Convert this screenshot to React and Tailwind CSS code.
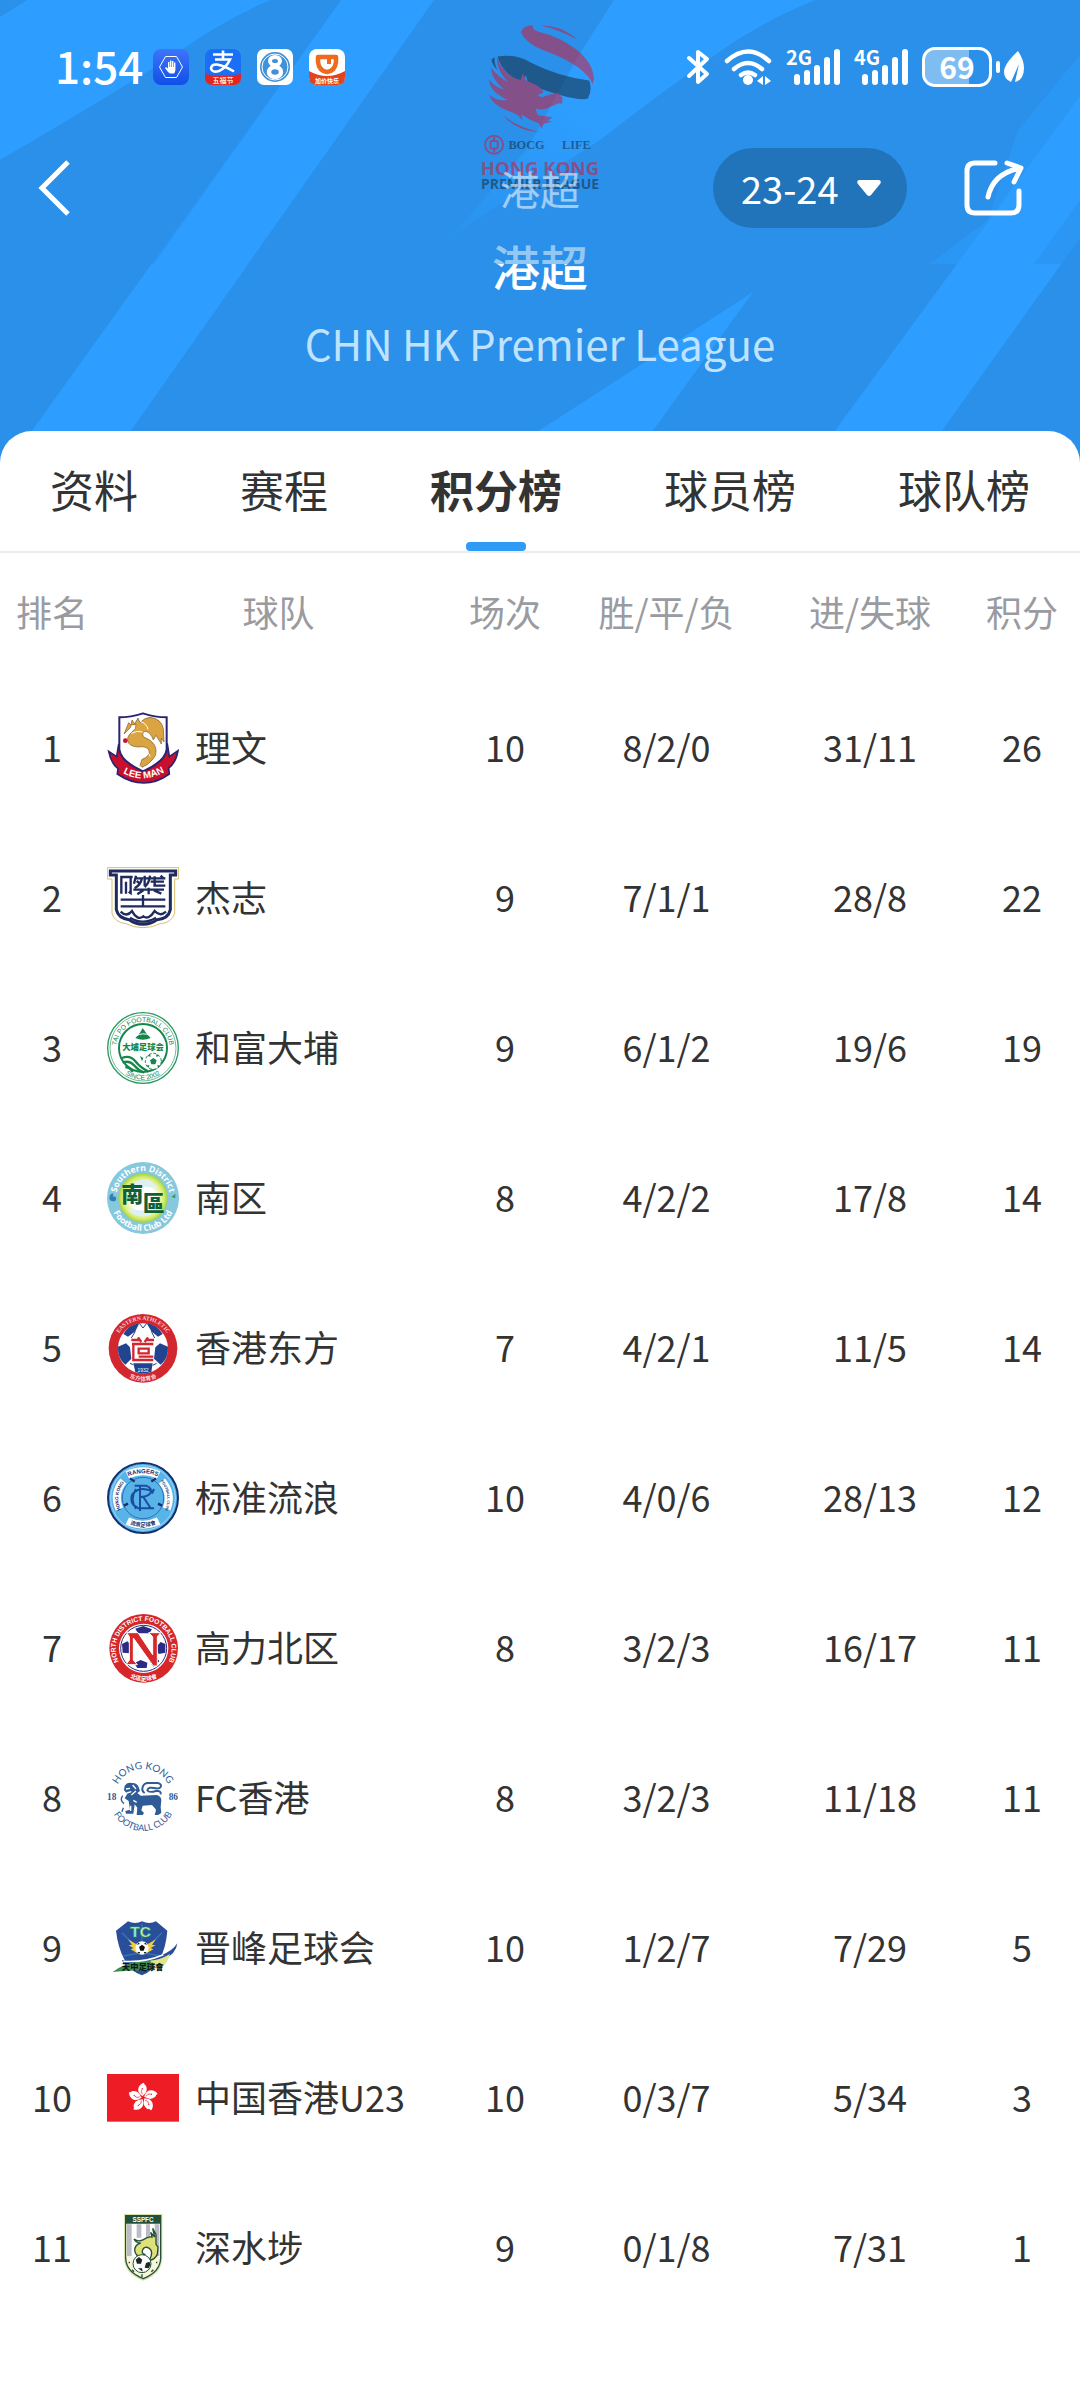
import React, { useState } from "react";

const tabs = ["资料", "赛程", "积分榜", "球员榜", "球队榜"];

/* ---------- Status bar ---------- */

const HandApp = () => (
    <svg className="w-9 h-9" viewBox="0 0 36 36">
        <defs>
            <linearGradient id="handBg" x1="0" y1="0" x2="0" y2="1">
                <stop offset="0" stopColor="#3f74fb" />
                <stop offset="1" stopColor="#0f50e8" />
            </linearGradient>
        </defs>
        <rect width="36" height="36" rx="8" fill="url(#handBg)" />
        <path d="M12.500 7.500h11l6 10.500-6 10.500h-11l-6-10.500z" fill="none" stroke="#fff" strokeWidth="1" strokeLinejoin="round" />
        <path d="M15 23l-3-4 1-1 2 1.500v-6.500h1.400v5h.6v-6.500h1.400v6.500h.6v-6h1.400v6h.6v-4.500h1.400v8q-.4 2.500-2 3h-3.400z" fill="#fff" />
    </svg>
);

const PayApp = () => (
    <svg className="w-9 h-9" viewBox="0 0 36 36">
        <rect width="36" height="33" rx="8" fill="#1a6ff5" />
        <path d="M8 5.500h20M18 1.500v9M10 10.500h15Q21 19 14 22Q7 24 6 19.500Q6.500 15 12 15.500Q20 17 29 22.500" fill="none" stroke="#fff" strokeWidth="2.600" />
        <path d="M0 25q18 4 36 0v3q0 8-8 8h-20q-8 0-8-8z" fill="#e5231f" />
        <text x="18" y="34" textAnchor="middle" fontSize="7" fontWeight="700" fill="#ffe6c0">五福节</text>
    </svg>
);

const EightApp = () => (
    <svg className="w-9 h-9" viewBox="0 0 36 36">
        <rect width="36" height="36" rx="7" fill="#fff" />
        <circle cx="18" cy="18" r="15" fill="#3f91d8" />
        <circle cx="18" cy="18" r="13" fill="#3f91d8" stroke="#fff" strokeWidth="1" />
        <ellipse cx="18" cy="12" rx="5" ry="4" fill="none" stroke="#fff" strokeWidth="4" />
        <ellipse cx="18" cy="23" rx="6" ry="5" fill="none" stroke="#fff" strokeWidth="4.500" />
    </svg>
);

const RideApp = () => (
    <svg className="w-9 h-9" viewBox="0 0 36 36">
        <rect width="36" height="36" rx="8" fill="#fff" />
        <path d="M9 8h18v5q-1 9-9 10-8-1-9-10z" fill="none" stroke="#ee6a1f" strokeWidth="4.500" strokeLinejoin="round" />
        <path d="M18 9h4v6h-4z" fill="#ee6a1f" />
        <path d="M0 22q18 10 36 0v6q0 8-8 8h-20q-8 0-8-8z" fill="#e2431e" />
        <text x="18" y="34" textAnchor="middle" fontSize="6" fontWeight="700" fill="#fff">加价快乐</text>
    </svg>
);

const Signal = ({ label }) => (
    <svg className="w-[54px] h-9 overflow-visible" viewBox="0 0 54 36" fill="#fff">
        <text x="0" y="16" fontSize="20" fontWeight="700">{label}</text>
        <rect x="8" y="25" width="6" height="11" rx="3" />
        <rect x="18" y="21" width="6" height="15" rx="3" />
        <rect x="28" y="16" width="6" height="20" rx="3" />
        <rect x="38" y="8" width="6" height="28" rx="3" />
        <rect x="48" y="0" width="6" height="36" rx="3" />
    </svg>
);

const StatusBar = () => (
    <div className="flex h-10 items-center justify-between pl-[55px] pr-14 text-white">
        <div className="flex items-center">
            <span className="w-[98px] pb-1 text-[44px] leading-10 font-medium">1:54</span>
            <div className="flex gap-4">
                <HandApp />
                <PayApp />
                <EightApp />
                <RideApp />
            </div>
        </div>
        <div className="flex items-center gap-[14px]">
            <svg className="w-6 h-9" viewBox="0 0 24 36" fill="none" stroke="#fff" strokeWidth="4" strokeLinecap="round" strokeLinejoin="round">
                <path d="M3 9l18 16-9 8v-30l9 7-18 17" />
            </svg>
            <svg className="w-12 h-9" viewBox="0 0 48 36" fill="none" stroke="#fff" strokeWidth="4.500" strokeLinecap="round">
                <path d="M3 12q21-19 42 0M10 20q14-12 28 0M17 26q7-5 14 0" />
                <circle cx="24" cy="31" r="5" fill="#fff" stroke="none" />
                <path d="M33 32l6-5v9zM47 32l-6-5v9z" fill="#fff" stroke="none" />
            </svg>
            <Signal label="2G" />
            <Signal label="4G" />
            <div className="flex items-center gap-1">
                <div className="relative h-10 w-[70px] rounded-[13px] border-3 border-white">
                    <div className="absolute inset-y-0 left-0 w-[69%] rounded-l-[10px] bg-white/40" />
                    <span className="relative block text-center text-[30px] leading-[32px] font-bold">69</span>
                </div>
                <div className="h-3 w-1 rounded-full bg-white" />
                <svg className="w-5 h-8" viewBox="0 0 20 32" fill="#fff">
                    <path d="M14 0q6 9 6 17 0 12-9 14l4-18-8 18q-7-3-7-10 0-8 14-21z" />
                </svg>
            </div>
        </div>
    </div>
);

/* ---------- Header ---------- */

const HeroPattern = () => (
    <svg className="absolute inset-0 h-full w-full" viewBox="0 0 1080 464" preserveAspectRatio="xMidYMin slice" fill="#2d9eff">
        <defs>
            <linearGradient id="bolt" x1="1" y1="0" x2="0" y2="1">
                <stop offset="0" stopColor="#2d9eff" />
                <stop offset="0.550" stopColor="#2d9eff" />
                <stop offset="1" stopColor="#2a92ee" />
            </linearGradient>
        </defs>
        <path d="M27 0h243q-50 22-90 51-70 45-180 109v-143z" />
        <path d="M341 0h93l-304 432-22 32h-100l23-32z" />
        <path d="M614 0h201q-50 20-96 52-60 42-119 88-70 44-149 97l76-88 52-94z" fill="url(#bolt)" />
        <path d="M753 292l-101 140-20 32h-140l48-34z" />
        <path d="M1080 96v142l-139 194-22 32h-108l23-32z" />
    </svg>
);

const ToolbarPattern = () => (
    <svg className="absolute inset-0 h-full w-full" viewBox="0 0 1080 264" preserveAspectRatio="xMidYMin slice">
        <rect width="1080" height="264" fill="#2a90ea" />
        <path d="M614 0h201q-50 20-96 52-60 42-119 88-70 44-149 97l76-88 52-94z" fill="url(#bolt)" />
        <g fill="#2d9eff">
            <path d="M27 0h243q-50 22-90 51-70 45-180 109v-143z" />
            <path d="M341 0h93l-186 264h-94z" />
            <path d="M1080 55v145l-46 64h-104l58-44 30-90z" />
        </g>
    </svg>
);

const LeagueEmblem = () => (
    <svg className="w-[120px] h-[173px]" viewBox="120 60 360 520">
        <g fill="#e0102a">
            <path d="M243 95q6-18 35-19-4 14 20 20 60 14 110 52 52 40 54 90l-4 16q-10-28-44-52-40-28-90-46-70-26-81-61z" />
            <path d="M305 77q60-2 108 43-50-30-108-43z" />
            <path d="M188 345q40 36 112 52-70-2-112-52z" />
        </g>
        <path d="M172 170q56-10 104 20 80 40 172 52 10 28-4 54-20 8-90-12-60-20-90-32l-6-26-14 20q-54-20-72-76z" fill="#14202c" />
        <path d="M154 178l10-6q-2 20 8 38-16-14-18-32z" fill="#14202c" />
        <path d="M170 176q2 40 34 70-30-14-52-44 4 40 40 66-24-2-46-30 4 34 38 52 10 8 20 10-28 8-58-16 14 34 56 48l-10-2q40 8 56 32l-4-18q26 18 52 26l8 16 8-14 24-6-12-4 14-10-44-6-8-20q18 6 34 0l36-16 10 2 2-18-14-14-24 4-24 8-14-6 18-8-6-12-18-12-28-12-10-22-6 20q-50-10-70-66z" fill="#e0102a" />
        <g fill="none" stroke="#e0102a" strokeWidth="6">
            <circle cx="162" cy="435" r="27" />
            <rect x="151" y="424" width="22" height="22" rx="5" />
            <path d="M162 412v12M162 446v12" />
        </g>
        <text x="205" y="447" fontFamily="Liberation Serif" fontSize="37" fontWeight="700" fill="#14202c">BOCG</text>
        <text x="366" y="447" fontFamily="Liberation Serif" fontSize="37" fontWeight="700" fill="#14202c">LIFE</text>
        <text x="300" y="526" textAnchor="middle" fontFamily="Open Sans" fontSize="56" fontWeight="700" fill="#e0102a">HONG KONG</text>
        <text x="300" y="569" textAnchor="middle" fontFamily="Open Sans" fontSize="42" fontWeight="700" fill="#14202c">PREMIER LEAGUE</text>
    </svg>
);

const Toolbar = () => {
    const [season, setSeason] = useState("23-24");

    return (
        <div className="absolute inset-x-0 top-0 pt-[47px] pb-9">
            <div className="absolute inset-0 opacity-50">
                <ToolbarPattern />
            </div>
            <div className="relative">
                <StatusBar />
                <div className="mt-[61px] grid grid-cols-[1fr_auto_1fr] items-center px-9">
                    <button type="button" aria-label="返回" className="w-9">
                        <svg className="w-9 h-14" viewBox="0 0 36 56" fill="none" stroke="#fff" strokeWidth="5">
                            <path d="M32 2l-26 26 26 26" />
                        </svg>
                    </button>
                    <span className="text-[40px] leading-[60px] text-white/55">港超</span>
                    <div className="flex items-center justify-end gap-[57px] pr-5">
                        <label className="relative block">
                            <select
                                aria-label="赛季"
                                value={season}
                                onChange={(e) => setSeason(e.target.value)}
                                className="h-20 w-[194px] appearance-none rounded-full bg-[#2274ba] pl-7 text-[38px] leading-10 text-white outline-none"
                            >
                                <option>23-24</option>
                                <option>22-23</option>
                                <option>21-22</option>
                            </select>
                            <svg className="pointer-events-none absolute right-[26px] top-8 h-4 w-6" viewBox="0 0 24 16" fill="#fff">
                                <path d="M2 0h20q3 1 1 4l-9 11q-2 2-4 0l-9-11q-2-3 1-4z" />
                            </svg>
                        </label>
                        <button type="button" aria-label="分享">
                            <svg className="w-[60px] h-14" viewBox="0 0 60 56" fill="none" stroke="#fff" strokeWidth="5" strokeLinecap="round" strokeLinejoin="round">
                                <path d="M31 3h-20q-8 0-8 8v34q0 8 8 8h36q8 0 8-8v-14" />
                                <path d="M24 37q5-24 33-29M43 3l14 5-7 14" />
                            </svg>
                        </button>
                    </div>
                </div>
            </div>
        </div>
    );
};

/* ---------- Club crests ---------- */

const LeeMan = () => (
    <svg className="size-[72px]" viewBox="51 68 216 216">
        <path d="M56 186l24 16 6-36 146-2 6 38 26-18q-6 36-28 52l2 18q-76 54-156 0l2-16q-20-14-28-52z" fill="#c8102e" stroke="#2b2370" strokeWidth="5" />
        <path d="M88 84q34 0 71-12 36 12 71 12v96q-4 36-71 66-67-30-71-66z" fill="#fff" stroke="#2b2370" strokeWidth="6" />
        <path d="M102 134l20-20 4-22 8 12 10-18 6 14q12-14 30-16 34 4 40 34l2 40-8-12v18l-16-26-8 14q-6-20-22-26-14 0-8 16 26 10 34 26 10 22-4 40-16 20-34 26l-6-6 6-18q20-6 22-22-2-14-20-16-30 4-42-10-10-18 10-34 14-10 12-22l-16 0-6-6z" fill="#d9a441" stroke="#7a5a2a" strokeWidth="2" />
        <path d="M124 132q20-10 34-4M150 96q20 6 24 24M122 176q4 16 30 12t28 14" fill="none" stroke="#fff" strokeWidth="3" />
        <circle cx="106" cy="154" r="7" fill="#c8102e" />
        <path id="leeArc" d="M86 244q73 48 150-4" fill="none" />
        <text fontSize="29" fontWeight="800" fontFamily="Liberation Sans" fill="#fff">
            <textPath href="#leeArc" startOffset="50%" textAnchor="middle">LEE MAN</textPath>
        </text>
    </svg>
);

const Kitchee = () => (
    <svg className="size-[72px]" viewBox="51 519 216 216">
        <path d="M52 536h214v34h-12v104q-10 28-44 30-22 12-51 12t-51-12q-34-4-42-30v-104h-14z" fill="#fff" stroke="#d6c06a" strokeWidth="3" />
        <path d="M61 546h196v12h-16v104q-6 28-40 30-18 14-42 14t-42-14q-32-4-38-30v-104h-18z" fill="#fff" stroke="#1f2a5e" strokeWidth="9" />
        <g fill="none" stroke="#1f2a5e" strokeWidth="7">
            <path d="M94 614v-50h34M108 614v-36M122 564v48l-6-4" />
            <path d="M138 560l-6 24M138 568h18q-4 20-22 30M140 576l10 8M164 560v32M160 568h66M180 560q-2 22-16 34M194 562v26M182 578h40M190 590h36" />
            <path d="M130 602h92M176 596v20M160 604l-18 12M192 604l22 10M212 560l8 8" />
            <path d="M92 632h134M159 618v34M92 652h134" />
            <path d="M92 668q18 18 34-2 16 30 34 16 16 12 34-16 16 18 34 2M120 686q38 24 78 0" />
        </g>
    </svg>
);

const TaiPo = () => (
    <svg className="size-[72px]" viewBox="51 68 216 216">
        <circle cx="159" cy="176" r="106" fill="#fff" stroke="#2a9a62" strokeWidth="4" />
        <circle cx="159" cy="176" r="99" fill="none" stroke="#2a9a62" strokeWidth="2" />
        <circle cx="159" cy="176" r="72" fill="#fff" stroke="#16864c" strokeWidth="6" />
        <path id="taiTop" d="M80 190a80 80 0 1 1 158 0" fill="none" />
        <path id="taiBottom" d="M66 178a93 93 0 0 0 186 0" fill="none" />
        <g fontFamily="Liberation Sans" fontSize="20" fill="#16864c">
            <text><textPath href="#taiTop" startOffset="50%" textAnchor="middle">TAI PO FOOTBALL CLUB</textPath></text>
            <text><textPath href="#taiBottom" startOffset="50%" textAnchor="middle">SINCE 2002</textPath></text>
        </g>
        <path d="M136 146l14-16 8-14 10 14 14 16q-24 10-46 0z" fill="#16864c" />
        <path d="M138 140q20-12 42-2" stroke="#fff" strokeWidth="3" fill="none" />
        <rect x="92" y="158" width="134" height="28" fill="#fff" />
        <text x="159" y="182" textAnchor="middle" fontSize="25" fontWeight="900" fill="#16864c">大埔足球会</text>
        <g fill="none" stroke="#16864c" strokeWidth="7">
            <path d="M96 206q24-10 40 10t38 30M98 220q20-8 34 8t30 22M106 234q12-2 22 14" />
        </g>
        <circle cx="190" cy="216" r="24" fill="#fff" stroke="#16864c" strokeWidth="3" strokeDasharray="9 5" />
        <path d="M190 206l10 7-4 12h-12l-4-12zM172 200l8-6 2 8zM208 200l-8-6-2 8zM170 228l8 0-2 8zM210 228l-8 0 2 8zM150 200l10 6-4 10z" fill="#16864c" />
    </svg>
);

const Southern = () => (
    <svg className="size-[72px]" viewBox="51 519 216 216">
        <defs>
            <radialGradient id="southGlow">
                <stop offset="0.500" stopColor="#fff" />
                <stop offset="0.850" stopColor="#d7ec6a" />
                <stop offset="1" stopColor="#9ad04a" />
            </radialGradient>
        </defs>
        <circle cx="159" cy="627" r="108" fill="#86c8dd" />
        <circle cx="159" cy="627" r="74" fill="url(#southGlow)" />
        <path d="M118 600q20-34 60-28l30 26q-50-10-90 2zM110 660q40 40 90 8" fill="#dff0f4" />
        <path id="southTop" d="M78 627a81 81 0 0 1 162 0" fill="none" />
        <path id="southBottom" d="M60 627a99 99 0 0 0 198 0" fill="none" />
        <g fontFamily="Open Sans" fontSize="26" fontWeight="700" fill="#fff">
            <text><textPath href="#southTop" startOffset="50%" textAnchor="middle">Southern District</textPath></text>
            <text><textPath href="#southBottom" startOffset="50%" textAnchor="middle">Football Club Ltd</textPath></text>
        </g>
        <text x="94" y="638" fontSize="66" fontWeight="900" fill="#0e5f3a">南</text>
        <text x="158" y="666" fontSize="66" fontWeight="900" fill="#0e5f3a">區</text>
        <path d="M60 618q14-10 8 4 16 0 8 14-16 4-18-8z" fill="#2f7fb5" />
        <path d="M244 624l12-10v14z" fill="#3a9a62" />
    </svg>
);

const Eastern = () => (
    <svg className="size-[72px]" viewBox="51 68 216 216">
        <circle cx="159" cy="177" r="103" fill="#d32730" />
        <circle cx="159" cy="177" r="75" fill="#fff" />
        <g fill="#22438f">
            <path d="M100 134q18-28 48-32l-12 24-22 16zM218 134q-18-28-48-32l14 24 20 16zM84 172l24-10 12 12 4 34-18 18q-24-20-22-54zM234 172l-24-10-14 12-4 34 20 18q24-20 22-54zM130 222h58l-4 26q-24 8-48 0z" />
        </g>
        <path d="M148 102l11 14 11-14M136 126l-12 20M184 126l10 20M120 222l10 4M200 222l-12 6" fill="none" stroke="#22438f" strokeWidth="3" />
        <g fill="none" stroke="#d32730" strokeWidth="7">
            <path d="M124 152h24M168 152h24M144 144l10 14M174 144l-10 14M126 164h64M130 164v48h60M146 178h30v14h-30zM146 202h44" />
        </g>
        <path id="eastTop" d="M74 177a85 85 0 0 1 170 0" fill="none" />
        <path id="eastBottom" d="M62 177a97 97 0 0 0 194 0" fill="none" />
        <g fill="#ffd9d9" fontSize="17" fontWeight="700">
            <text fontFamily="Liberation Serif"><textPath href="#eastTop" startOffset="50%" textAnchor="middle">EASTERN ATHLETIC</textPath></text>
            <text><textPath href="#eastBottom" startOffset="50%" textAnchor="middle">东方体育会</textPath></text>
        </g>
        <text x="159" y="248" textAnchor="middle" fontFamily="Liberation Sans" fontSize="15" fill="#fff">1932</text>
    </svg>
);

const Rangers = () => (
    <svg className="size-[72px]" viewBox="51 519 216 216">
        <circle cx="159" cy="627" r="105" fill="#58b4e8" stroke="#15306e" strokeWidth="6" />
        <circle cx="159" cy="627" r="97" fill="none" stroke="#c9e9fa" strokeWidth="2" />
        <g fill="none" stroke="#fff" strokeWidth="24">
            <path d="M112 558q47-22 94 0" />
            <path d="M100 576q-32 38-12 84" />
            <path d="M216 576q32 38 14 84" />
            <path d="M112 696q47 22 94 0" />
        </g>
        <circle cx="159" cy="627" r="62" fill="#58b4e8" stroke="#1d4f96" strokeWidth="2" />
        <path d="M120 568l14 10M198 568l-14 10M102 650l12-6M216 650l-12-6" stroke="#1b2e6b" strokeWidth="7" />
        <g fill="none" stroke="#1b4da0" strokeWidth="6">
            <path d="M150 590v76M134 590h34q22 8 12 24-8 10-32 10M160 624l22 34h10M192 600l-6 14M192 608q-46-20-66 10-8 28 20 40h44M138 600q-20 30 0 60" />
        </g>
        <path id="rngTop" d="M110 564q49-22 98 0" fill="none" />
        <path id="rngLeft" d="M93 664q-20-46 10-84" fill="none" />
        <path id="rngRight" d="M212 576q30 38 14 88" fill="none" />
        <path id="rngBottom" d="M112 702q47 22 94 0" fill="none" />
        <g fill="#1b2e6b" fontFamily="Liberation Sans" fontSize="18" fontWeight="700">
            <text><textPath href="#rngTop" startOffset="50%" textAnchor="middle">RANGERS</textPath></text>
            <text fontSize="14"><textPath href="#rngLeft" startOffset="50%" textAnchor="middle">HONG KONG</textPath></text>
            <text fontSize="11"><textPath href="#rngRight" startOffset="50%" textAnchor="middle">FOOTBALL CLUB</textPath></text>
            <text fontFamily="Noto Sans CJK SC" fontSize="16"><textPath href="#rngBottom" startOffset="50%" textAnchor="middle">流浪足球會</textPath></text>
        </g>
    </svg>
);

const NorthDistrict = () => (
    <svg className="size-[72px]" viewBox="51 68 216 216">
        <circle cx="161" cy="177" r="103" fill="#d6282a" />
        <circle cx="161" cy="177" r="74" fill="#fff" />
        <circle cx="161" cy="177" r="69" fill="#fff" stroke="#2b2c83" strokeWidth="3" />
        <g fill="#2b2c83">
            <path d="M136 118l24-8 26 10-8 12h-34zM96 164l16-8 14 14-6 22-22-2zM226 164l-14-6-14 16 8 20 20-4zM132 222l20-10 20 8-2 16h-28zM178 214l22-10 8 12-18 16z" />
        </g>
        <path d="M110 130h34l44 66v-54l-12-12h36l-10 12v88h-12l-60-84v66l12 14h-34l10-14v-70z" fill="#d6282a" stroke="#fff" strokeWidth="3" />
        <path id="nthTop" d="M84 212a84 84 0 1 1 154 0" fill="none" />
        <path id="nthBottom" d="M64 177a97 97 0 0 0 194 0" fill="none" />
        <g fill="#fff" fontSize="20" fontWeight="700">
            <text fontFamily="Liberation Sans"><textPath href="#nthTop" startOffset="50%" textAnchor="middle">NORTH DISTRICT FOOTBALL CLUB</textPath></text>
            <text fontSize="17"><textPath href="#nthBottom" startOffset="50%" textAnchor="middle">北區足球會</textPath></text>
        </g>
    </svg>
);

const HongKongFC = () => (
    <svg className="size-[72px]" viewBox="51 519 216 216">
        <path id="hkTop" d="M74 625a85 85 0 0 1 170 0" fill="none" />
        <path id="hkBottom" d="M58 625a101 101 0 0 0 202 0" fill="none" />
        <g fill="#2f5c96" fontFamily="Lato" fontSize="30">
            <text><textPath href="#hkTop" startOffset="50%" textAnchor="middle">HONG KONG</textPath></text>
            <text fontSize="27"><textPath href="#hkBottom" startOffset="50%" textAnchor="middle">FOOTBALL CLUB</textPath></text>
            <text x="51" y="634" fontFamily="Liberation Serif" fontSize="28" fontWeight="700">18</text>
            <text x="236" y="634" fontFamily="Liberation Serif" fontSize="28" fontWeight="700">86</text>
        </g>
        <g fill="#2f5c96">
            <path d="M104 590q8-12 20-8 16-2 22 12l4 12-8 6 10 8 48-2q14 4 14 16l-2 20 2 18-10 6h-10l4-14-12-16-28 2-4 14 8 8-4 6h-18l2-22-8-10-4 28h-22l-2-8 14-4-4-26-12-8 8-14-10-10z" />
        </g>
        <path d="M108 600l12-2M110 612l14-4M128 588l10 12M124 618l14-12M130 634l10 6M186 652l10 10M122 650v16" stroke="#fff" strokeWidth="4" />
        <path d="M164 612q-10-6-6-18 4-12 16-12l30 0q12 4 8 12-4 6-14 4-24-6-26 6 4 8 26 2 16-2 14 10" fill="none" stroke="#2f5c96" strokeWidth="6" />
        <path d="M98 620q-10 14 4 24M100 656l-4 12" fill="none" stroke="#2f5c96" strokeWidth="4" />
    </svg>
);

const TinChung = () => (
    <svg className="size-[72px]" viewBox="51 68 216 216">
        <path d="M114 96q22 10 42 0 22 10 42 0l34 28q-4 50-22 84-20 36-54 50-38-14-54-50-18-34-24-84z" fill="#2a4f9a" />
        <path d="M156 190l-60-60M156 190l60-60M156 190l-56 10M156 190l56 10M156 190v-86" stroke="#3c71b8" strokeWidth="4" />
        <text x="121" y="144" fontFamily="Liberation Sans" fontSize="46" fontWeight="700" fill="#d5f3d2" stroke="#2faa5a" strokeWidth="2">TC</text>
        <path d="M114 150l28 16v26l-20-12 8-4-14-8 10-2zM198 150l-28 16v26l20-12-8-4 14-8-10-2z" fill="#f0cf3a" />
        <circle cx="156" cy="176" r="20" fill="#fff" />
        <path d="M156 166l9 7-4 11h-10l-4-11zM140 166l6-6 4 4zM172 166l-6-6-4 4zM142 188l8 0-2 6zM170 188l-8 0 2 6z" fill="#111" />
        <path d="M84 236q60-6 106-28 50-16 72-46-6 34-30 50l-10 24q-70 4-138 10z" fill="#fff" />
        <path d="M96 212q64 12 118-14 34-14 48-36-4 34-42 48-60 22-120 12z" fill="#2a4f9a" />
        <path d="M68 248q30-24 78-32l78-6q-10 30-60 34-50-2-96 4z" fill="#3f8d55" />
        <path d="M180 214q30-2 60-20-4 20-20 36l-20 8z" fill="#dfe58a" />
        <path d="M100 216q64 4 120-20" fill="none" stroke="#fff" strokeWidth="5" />
        <text x="158" y="243" textAnchor="middle" fontSize="25" fontWeight="900" fill="#0d1a14">天中足球會</text>
    </svg>
);

const HongKongFlag = () => (
    <svg className="size-[72px]" viewBox="51 519 216 216">
        <rect x="51" y="555" width="216" height="143" fill="#ee1c25" />
        {[0, 72, 144, 216, 288].map((angle) => (
            <g key={angle} transform={`rotate(${angle} 159 626)`}>
                <path d="M158 622q-16-10-13-24 4-14 17-17 0 6 6 9 6 15-4 25-5 4-6 7z" fill="#fff" />
                <path d="M158 616q-7-8-2-15" fill="none" stroke="#ee1c25" strokeWidth="2" />
                <circle cx="157" cy="599" r="2" fill="#ee1c25" />
            </g>
        ))}
    </svg>
);

const ShamShuiPo = () => (
    <svg className="size-[72px]" viewBox="51 969 216 216">
        <path d="M104 977h111v132q-2 44-55 64-54-20-56-64z" fill="#fff" stroke="#d8e2a8" strokeWidth="4" />
        <path d="M107 980h105v128q-2 42-52 61-51-19-53-61z" fill="#f7f6d8" stroke="#24503a" strokeWidth="4" />
        <path d="M107 980h105v24h-105z" fill="#24503a" />
        <path d="M110 1006h100v98h-100z" fill="#fff" />
        <path d="M111 1006h14v96h-14zM140 1006h14v40h-14zM168 1006h12v40h-12zM194 1006h14v96h-14z" fill="#b9bcc4" />
        <text x="159" y="999" textAnchor="middle" fontFamily="Liberation Sans" fontSize="19" fontWeight="700" fill="#fff">SSPFC</text>
        <path d="M132 1050q14 10 28 2 14-10 26-8l-4-14 12 14-6-26 10 18 0 30 6 8-2 22q-8 16-24 18 14-26 0-36-14-8-20 4-4 12 6 14l-8 8q-20-2-22-20 0-16 18-22-14 0-20-12z" fill="#e0e07a" stroke="#24503a" strokeWidth="4" />
        <circle cx="156" cy="1124" r="27" fill="#fff" stroke="#24503a" strokeWidth="3" />
        <path d="M137 1112l10-8 10 8-4 12h-12zM168 1122l10-4 4 8-6 12-12-2zM144 1138l12 0 2 10z" fill="#1c2a22" />
        <path d="M126 1142l6 6M156 1156v8M190 1142l-6 6M118 1118v5M200 1118v5" stroke="#24503a" strokeWidth="4" />
    </svg>
);

const teams = [
    { name: "理文", crest: LeeMan, played: 10, record: "8/2/0", goals: "31/11", points: 26 },
    { name: "杰志", crest: Kitchee, played: 9, record: "7/1/1", goals: "28/8", points: 22 },
    { name: "和富大埔", crest: TaiPo, played: 9, record: "6/1/2", goals: "19/6", points: 19 },
    { name: "南区", crest: Southern, played: 8, record: "4/2/2", goals: "17/8", points: 14 },
    { name: "香港东方", crest: Eastern, played: 7, record: "4/2/1", goals: "11/5", points: 14 },
    { name: "标准流浪", crest: Rangers, played: 10, record: "4/0/6", goals: "28/13", points: 12 },
    { name: "高力北区", crest: NorthDistrict, played: 8, record: "3/2/3", goals: "16/17", points: 11 },
    { name: "FC香港", crest: HongKongFC, played: 8, record: "3/2/3", goals: "11/18", points: 11 },
    { name: "晋峰足球会", crest: TinChung, played: 10, record: "1/2/7", goals: "7/29", points: 5 },
    { name: "中国香港U23", crest: HongKongFlag, played: 10, record: "0/3/7", goals: "5/34", points: 3 },
    { name: "深水埗", crest: ShamShuiPo, played: 9, record: "0/1/8", goals: "7/31", points: 1 },
];

const Standings = () => (
    <table className="w-full table-fixed text-center text-[36px] leading-[54px] text-[#333]">
        <thead>
            <tr className="h-[120px] text-[#999ba1]">
                <th className="w-[104px] pb-1 font-normal">排名</th>
                <th className="pb-1 font-normal">球队</th>
                <th className="w-[104px] pb-1 font-normal">场次</th>
                <th className="w-[219px] pb-1 font-normal">胜/平/负</th>
                <th className="w-[188px] pb-1 font-normal">进/失球</th>
                <th className="w-[116px] pb-1 font-normal">积分</th>
            </tr>
        </thead>
        <tbody>
            {teams.map((team, index) => {
                const Crest = team.crest;
                return (
                    <tr key={team.name} className="h-[150px]">
                        <td className="pb-1">{index + 1}</td>
                        <td>
                            <div className="flex items-center gap-4 pl-[3px] whitespace-nowrap">
                                <Crest />
                                <span className="pb-1">{team.name}</span>
                            </div>
                        </td>
                        <td className="pb-1">{team.played}</td>
                        <td className="pb-1">{team.record}</td>
                        <td className="pb-1">{team.goals}</td>
                        <td className="pb-1">{team.points}</td>
                    </tr>
                );
            })}
        </tbody>
    </table>
);

const App = () => {
    const [activeTab, setActiveTab] = useState("积分榜");

    return (
        <div className="min-h-screen bg-white font-['Noto_Sans_CJK_SC',sans-serif]">
            <header className="relative overflow-hidden bg-[#2a90ea] pt-5 pb-[90px]">
                <HeroPattern />
                <div className="relative flex flex-col items-center">
                    <LeagueEmblem />
                    <h1 className="mt-[42px] text-[48px] leading-[60px] font-medium text-white">港超</h1>
                    <p className="mt-[18px] text-[42px] leading-[60px] text-[#bfe3ff]">CHN HK Premier League</p>
                </div>
                <Toolbar />
            </header>

            <main className="relative -mt-8 rounded-t-[32px] bg-white">
                <nav className="flex h-[122px] justify-between border-b-2 border-[#ececec] px-[50px]">
                    {tabs.map((tab) => (
                        <button
                            key={tab}
                            type="button"
                            onClick={() => setActiveTab(tab)}
                            className={`relative pb-1 text-[44px] leading-[60px] text-[#333] ${activeTab === tab ? "font-bold" : ""}`}
                        >
                            {tab}
                            {activeTab === tab && (
                                <span className="absolute bottom-0 left-1/2 h-[9px] w-[60px] -translate-x-1/2 rounded-[4px] bg-[#2f9bf5]" />
                            )}
                        </button>
                    ))}
                </nav>
                <Standings />
            </main>
        </div>
    );
};

export default App;
